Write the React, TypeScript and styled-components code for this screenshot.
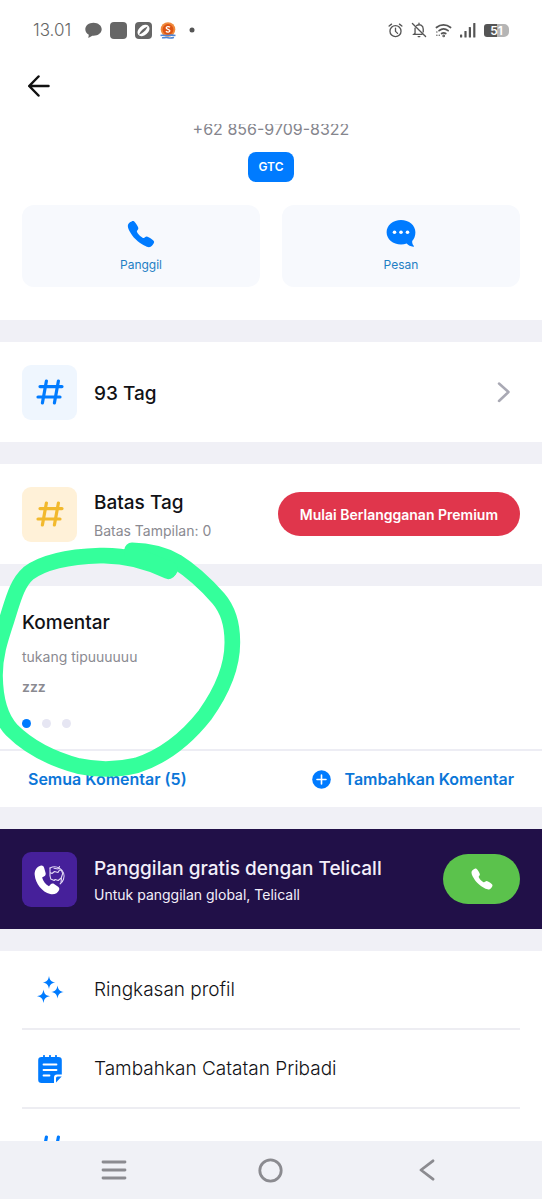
import React from "react";
import styled, { createGlobalStyle } from "styled-components";
import { IoCall } from "react-icons/io5";

const GlobalStyle = createGlobalStyle`
  *, *::before, *::after { box-sizing: border-box; }
  body {
    margin: 0;
    background: #fff;
    font-family: Inter, "Liberation Sans", sans-serif;
    color: #111216;
  }
  h2, p, ul { margin: 0; padding: 0; }
  button { border: 0; padding: 0; background: none; font: inherit; color: inherit; cursor: pointer; }
  a { color: inherit; text-decoration: none; }
  svg { display: block; flex: none; }
`;

const Screen = styled.div`
  display: flex;
  flex-direction: column;
  height: 100vh;
  overflow: hidden;
`;

const StatusBar = styled.div`
  display: flex;
  align-items: center;
  justify-content: space-between;
  flex: none;
  height: 60px;
  padding: 0 33px;
  color: #666;
`;

const StatusGroup = styled.div`
  display: flex;
  align-items: center;
  gap: 8px;
`;

const Clock = styled.time`
  margin-right: 6px;
  font-size: 17px;
  font-weight: 300;
  line-height: 20px;
`;

const Battery = styled.span`
  display: flex;
  align-items: center;
  justify-content: center;
  width: 25px;
  height: 13px;
  border-radius: 3px 5px 5px 3px;
  background: linear-gradient(to right, #555 52%, #b5b5b5 52%);
  color: #fff;
  font-size: 12px;
  font-weight: 600;
  line-height: 13px;
`;

const AppBar = styled.header`
  display: flex;
  align-items: flex-start;
  flex: none;
  height: 64px;
  padding: 15px 28px;
`;

const Content = styled.main`
  flex: 1;
  min-height: 0;
  overflow: hidden;
  background: #f0f0f6;
  display: flex;
  flex-direction: column;
  gap: 22px;
  & > * { flex: none; }
`;

const Profile = styled.section`
  display: flex;
  flex-direction: column;
  align-items: center;
  padding-bottom: 33px;
  background: #fff;
`;

const PhoneNumber = styled.div`
  display: flex;
  align-items: flex-end;
  height: 17px;
  overflow: hidden;
  color: #85858d;
  font-size: 16px;
  line-height: 24px;
`;

const Badge = styled.span`
  margin: 11px 0 23px;
  padding: 0 10px;
  border-radius: 8px;
  background: #007bff;
  color: #fff;
  font-size: 12px;
  font-weight: 600;
  line-height: 30px;
`;

const Actions = styled.div`
  display: grid;
  grid-template-columns: 1fr 1fr;
  gap: 22px;
  width: 100%;
  padding: 0 22px;
`;

const ActionCard = styled.button`
  display: flex;
  flex-direction: column;
  align-items: center;
  gap: 8px;
  height: 82px;
  padding-top: 14px;
  border-radius: 12px;
  background: #f7f9fd;
  color: #007bff;
`;

const ActionLabel = styled.span`
  color: #1f7fc4;
  font-size: 12px;
  line-height: 16px;
`;

const Row = styled.section<{ $dark?: boolean }>`
  display: flex;
  align-items: center;
  gap: 17px;
  height: 100px;
  padding: 0 22px;
  background: ${(p) => (p.$dark ? "#211048" : "#fff")};
  color: ${(p) => (p.$dark ? "#f3effa" : "inherit")};
`;

const Tile = styled.span<{ $bg: string; $fg: string }>`
  display: flex;
  align-items: center;
  justify-content: center;
  flex: none;
  width: 55px;
  height: 55px;
  border-radius: 9px;
  background: ${(p) => p.$bg};
  color: ${(p) => p.$fg};
`;

const RowText = styled.div<{ $gap?: number }>`
  display: flex;
  flex-direction: column;
  gap: ${(p) => p.$gap ?? 0}px;
  flex: 1;
  min-width: 0;
  padding-top: 3px;
  white-space: nowrap;
`;

const Title = styled.h2`
  font-size: 19px;
  font-weight: 500;
  line-height: 24px;
`;

const Caption = styled.p<{ $light?: boolean; $strong?: boolean }>`
  color: ${(p) => (p.$light ? "#f3effa" : "#8a8a91")};
  font-size: 14px;
  font-weight: ${(p) => (p.$strong ? 600 : 400)};
  line-height: 20px;
`;

const PremiumButton = styled.button`
  flex: none;
  height: 44px;
  padding: 0 22px;
  border-radius: 22px;
  background: #e0364c;
  color: #fff;
  font-size: 14px;
  font-weight: 600;
`;

const CallButton = styled.button`
  display: flex;
  align-items: center;
  justify-content: center;
  width: 77px;
  height: 50px;
  border-radius: 25px;
  background: #5bc24c;
  color: #fff;
`;

const Comments = styled.section`
  position: relative;
  background: #fff;
`;

const CommentBody = styled.div`
  display: flex;
  flex-direction: column;
  gap: 10px;
  padding: 25px 22px 21px;
  & > h2 { margin-bottom: 2px; }
`;

const Dots = styled.div`
  display: flex;
  gap: 11px;
  padding-top: 12px;
`;

const Dot = styled.span<{ $active?: boolean }>`
  width: 9px;
  height: 9px;
  border-radius: 50%;
  background: ${(p) => (p.$active ? "#007bff" : "#e6e6f3")};
`;

const CommentLinks = styled.div`
  display: flex;
  align-items: center;
  justify-content: space-between;
  height: 58px;
  padding: 0 28px;
  border-top: 2px solid #ededf4;
`;

const CommentLink = styled.a`
  display: flex;
  align-items: center;
  gap: 13px;
  color: #0b76d8;
  font-size: 16px;
  font-weight: 600;
  line-height: 24px;
`;

const Marker = styled.svg`
  position: absolute;
  left: 0;
  top: -56px;
  pointer-events: none;
`;

const Menu = styled.ul`
  padding: 0 22px;
  background: #fff;
  list-style: none;
`;

const MenuItem = styled.li`
  border-bottom: 2px solid #ededf2;
`;

const MenuLink = styled.a`
  display: flex;
  align-items: center;
  gap: 17px;
  height: 77px;
  font-size: 19px;
  font-weight: 300;
  line-height: 24px;
`;

const MenuIcon = styled.span`
  display: flex;
  justify-content: center;
  width: 55px;
  color: #007bff;
`;

const NavBar = styled.nav`
  display: grid;
  grid-template-columns: 1fr 1fr 1fr;
  flex: none;
  height: 58px;
  padding: 0 36px;
  background: #f0f1f6;
  color: #8b8b90;
`;

const NavButton = styled.button`
  display: flex;
  align-items: center;
  justify-content: center;
`;

const HashIcon = () => (
  <svg width="28" height="28" viewBox="0 0 28 28" fill="none" stroke="currentColor" strokeWidth="3.200" strokeLinecap="round">
    <path d="M10.4 3 6.4 25M22.4 3l-4 22M4 8.6h22M2 19h22" />
  </svg>
);

const ChatIcon = () => (
  <svg width="30" height="30" viewBox="0 0 30 30">
    <path
      d="M15 1C7 1 .6 6.300.6 13.200S7 25.400 15 25.400c2 0 4-.3 5.700-.9 1.700 1.700 3.800 2.900 6.500 3.300.7.100 1-.6.500-1-1.200-1.300-1.700-3-1.500-4.800 2-2.200 3.200-5.300 3.200-8.800C29.400 6.300 23 1 15 1z"
      fill="currentColor"
    />
    <g fill="#fff">
      <circle cx="8.500" cy="13.200" r="1.800" />
      <circle cx="15" cy="13.200" r="1.800" />
      <circle cx="21.500" cy="13.200" r="1.800" />
    </g>
  </svg>
);

const GlobeCallIcon = () => (
  <svg width="34" height="34" viewBox="0 0 34 34">
    <path
      d="M7.500 3.700C3.500 5 1.200 8.500 1.700 13c.8 8.500 7.300 17 15.500 19 4 .9 7.500-.7 8.900-4 .5-1.300.2-2.500-1-3.300l-4-2.600c-1.200-.8-2.600-.6-3.600.5L16 24.300c-3.300-1.900-5.800-5-6.900-8.900l2.200-1.100c1.200-.7 1.700-2 1.300-3.300L11.100 5.800c-.5-1.700-2-2.600-3.600-2.100z"
      fill="#fff"
    />
    <g fill="none" stroke="#e3d9f6" strokeWidth="1.100" strokeLinejoin="round" strokeLinecap="round">
      <path d="M17 6c3-1.600 6.500-1.600 9.500.2 4 2.500 5.500 7 4 11-.7 2-1.800 3.500-3.300 4.600" />
      <path d="M17 6v4.500l2 1 2.500-2 3.500 1 1.500-2.500 2 .5 1.200 3-1.500 4.500-3 2.500-3-1-1 1-3.500-1.500-.7-3.500M17 10.500v3.500M26.500 4.500l-1.500 2.500-4-.8M28.500 16.500l-.5 3.500" />
    </g>
  </svg>
);

const SparklesIcon = () => (
  <svg width="28" height="28" viewBox="0 0 28 28" fill="currentColor">
    <path d="M13 0c.8 4.400 2 5.700 6.300 6.500C15 7.300 13.800 8.600 13 13c-.8-4.400-2-5.700-6.300-6.500C11 5.700 12.200 4.400 13 0z" />
    <path d="M21.500 9.500c.8 4.400 2 5.700 6.300 6.500-4.300.8-5.500 2.100-6.300 6.500-.8-4.400-2-5.700-6.300-6.500 4.300-.8 5.500-2.100 6.300-6.500z" />
    <path d="M7.500 13.500c.8 4.500 2.100 5.900 6.500 6.700-4.400.8-5.700 2.200-6.500 6.700-.8-4.500-2.100-5.900-6.500-6.700 4.400-.8 5.700-2.200 6.500-6.700z" />
  </svg>
);

const NoteIcon = () => (
  <svg width="24" height="28" viewBox="0 0 24 28">
    <path d="M3.500 2H20.500A3.300 3.300 0 0 1 23.800 5.300V19.500H19a3 3 0 0 0-3 3V28H3.500A3.300 3.300 0 0 1 .2 24.700V5.300A3.300 3.300 0 0 1 3.500 2z" fill="currentColor" />
    <path d="M18 27.500v-4.300a1.700 1.700 0 0 1 1.700-1.700h4z" fill="currentColor" />
    <path d="M6 .8v2M12 .8v2M18 .8v2" stroke="currentColor" strokeWidth="1.800" strokeLinecap="round" />
    <path d="M5.500 9.500h13M5.500 15h13M5.500 20.500h6" stroke="#fff" strokeWidth="1.800" strokeLinecap="round" />
  </svg>
);

const AlarmIcon = () => (
  <svg width="15" height="15" viewBox="0 0 16 16" fill="none" stroke="#555" strokeWidth="1.400" strokeLinecap="round">
    <circle cx="8" cy="8.700" r="5.900" />
    <path d="M8 5.500v3.400l2.200 2.200M1.200 3.300 3.800 1.200M14.800 3.300l-2.600-2.100" />
  </svg>
);

const BellOffIcon = () => (
  <svg width="16" height="16" viewBox="0 0 17 16" fill="none" stroke="#555" strokeWidth="1.400" strokeLinecap="round">
    <path d="M1.500 1 15.500 15M4.300 6v5.500L3 12.700h8.500M6 3.300c3-2 7-.3 7 3.700v3M8.500.6v1M7.600 15h1.800" />
  </svg>
);

const WifiIcon = () => (
  <svg width="17" height="15" viewBox="0 0 18 15" fill="none" stroke="#555" strokeWidth="1.800" strokeLinecap="round">
    <path d="M1.500 4.300c4.500-3.800 10.500-3.800 15 0M4.300 7.700c3-2.400 6.700-2.400 9.600 0M7 10.700c1.500-1 3-1 4.400 0" />
    <circle cx="9.200" cy="13.200" r=".5" />
    <path d="M2 9v.1M2 12.500v.1M4.500 12.500v.1" strokeWidth="1.500" />
  </svg>
);

const SignalIcon = () => (
  <svg width="16" height="15" viewBox="0 0 16 15" fill="#555">
    <rect y="11.500" width="2.200" height="3" rx=".6" />
    <rect x="4.400" y="8" width="2.200" height="6.500" rx=".6" />
    <rect x="8.800" y="4" width="2.200" height="10.500" rx=".6" />
    <rect x="13.200" y="0" width="2.200" height="14.500" rx=".6" />
  </svg>
);

const CoinIcon = () => (
  <svg width="16" height="17" viewBox="0 0 16 17">
    <circle cx="8" cy="7.500" r="7.300" fill="#f08a3c" />
    <circle cx="8" cy="7.500" r="5.400" fill="#dd5413" />
    <path d="M10 5.300C9 4.300 6.100 4.400 6.200 6c.1 1.600 3.700 1 3.700 2.800 0 1.500-2.800 1.700-4 .5" fill="none" stroke="#fff" strokeWidth="1.300" />
    <path d="M.5 13.500c2.500-1 4.500.6 7.500 0s5-.5 7.500 0M2 15.700c2 .5 3-.7 6 0s4 .3 6-.3" fill="none" stroke="#4f86d6" strokeWidth="1.500" />
  </svg>
);

const App = () => (
  <>
    <GlobalStyle />
    <Screen>
      <StatusBar>
        <StatusGroup>
          <Clock>13.01</Clock>
          <svg width="17" height="17" viewBox="0 0 17 17" fill="#666">
            <path d="M8.500.8C4 .8.300 3.600.3 7.300c0 2.300 1.400 4.300 3.500 5.500L3.300 16l4-2.300 1.200.1c4.600 0 8.200-2.900 8.200-6.500S13 .8 8.500.8z" />
          </svg>
          <svg width="17" height="17" viewBox="0 0 17 17">
            <rect width="17" height="17" rx="4" fill="#666" />
          </svg>
          <svg width="17" height="17" viewBox="0 0 17 17">
            <rect width="17" height="17" rx="4" fill="#666" />
            <ellipse cx="8.500" cy="8.500" rx="6.800" ry="4.700" transform="rotate(-40 8.500 8.500)" fill="#fff" />
            <path d="M4 12.500c1.500-3.500 4.500-6.500 8.500-8-1 3.500-4.500 6.800-8.500 8z" fill="#666" />
          </svg>
          <CoinIcon />
          <svg width="14" height="6" viewBox="0 0 14 6">
            <circle cx="8" cy="3" r="2.500" fill="#555" />
          </svg>
        </StatusGroup>
        <StatusGroup>
          <AlarmIcon />
          <BellOffIcon />
          <WifiIcon />
          <SignalIcon />
          <Battery>51</Battery>
        </StatusGroup>
      </StatusBar>

      <AppBar>
        <button aria-label="Kembali">
          <svg width="22" height="22" viewBox="0 0 22 22" fill="none" stroke="#111" strokeWidth="2.500" strokeLinecap="round" strokeLinejoin="round">
            <path d="M20.500 11H1.500M10.500 1.500 1.200 11l9.300 9.500" />
          </svg>
        </button>
      </AppBar>

      <Content>
        <Profile>
          <PhoneNumber>+62 856-9709-8322</PhoneNumber>
          <Badge>GTC</Badge>
          <Actions>
            <ActionCard>
              <IoCall size={30} />
              <ActionLabel>Panggil</ActionLabel>
            </ActionCard>
            <ActionCard>
              <ChatIcon />
              <ActionLabel>Pesan</ActionLabel>
            </ActionCard>
          </Actions>
        </Profile>

        <Row>
          <Tile $bg="#eff6fe" $fg="#007bff">
            <HashIcon />
          </Tile>
          <RowText>
            <Title>93 Tag</Title>
          </RowText>
          <svg width="32" height="22" viewBox="0 0 32 22" fill="none" stroke="#a9a9b4" strokeWidth="2.500" strokeLinecap="round" strokeLinejoin="round">
            <path d="M11 2.500 20.500 11 11 20" />
          </svg>
        </Row>

        <Row>
          <Tile $bg="#fff1d8" $fg="#f2b92d">
            <HashIcon />
          </Tile>
          <RowText $gap={6}>
            <Title>Batas Tag</Title>
            <Caption>Batas Tampilan: 0</Caption>
          </RowText>
          <PremiumButton>Mulai Berlangganan Premium</PremiumButton>
        </Row>

        <Comments>
          <CommentBody>
            <Title>Komentar</Title>
            <Caption>tukang tipuuuuuu</Caption>
            <Caption $strong>zzz</Caption>
            <Dots>
              <Dot $active />
              <Dot />
              <Dot />
            </Dots>
          </CommentBody>
          <CommentLinks>
            <CommentLink href="#semua">Semua Komentar (5)</CommentLink>
            <CommentLink href="#tambah">
              <svg width="19" height="19" viewBox="0 0 19 19">
                <circle cx="9.500" cy="9.500" r="9.300" fill="#007bff" />
                <path d="M9.500 5v9M5 9.500h9" stroke="#fff" strokeWidth="1.600" strokeLinecap="round" />
              </svg>
              Tambahkan Komentar
            </CommentLink>
          </CommentLinks>
          <Marker width="250" height="270" viewBox="0 0 750 810" fill="none" stroke="#34ff9b" strokeWidth="47" strokeLinecap="round" strokeLinejoin="round" aria-hidden="true">
            <path d="M505 124C440 92 370 75 300 77C210 80 130 96 85 130C50 160 38 215 20 270C0 330-16 380-15 440C-14 500-2 560 35 600C85 650 150 685 235 708C290 720 350 720 410 706C490 680 560 625 615 555C665 485 698 410 697 335C697 285 685 240 655 205C615 160 570 120 530 95C490 72 440 62 396 61" />
            <path d="M396 72 510 118" />
          </Marker>
        </Comments>

        <Row $dark>
          <Tile $bg="#46209a" $fg="#fff">
            <GlobeCallIcon />
          </Tile>
          <RowText $gap={4}>
            <Title>Panggilan gratis dengan Telicall</Title>
            <Caption $light>Untuk panggilan global, Telicall</Caption>
          </RowText>
          <CallButton aria-label="Panggil">
            <IoCall size={24} />
          </CallButton>
        </Row>

        <Menu>
          <MenuItem>
            <MenuLink href="#ringkasan">
              <MenuIcon><SparklesIcon /></MenuIcon>
              Ringkasan profil
            </MenuLink>
          </MenuItem>
          <MenuItem>
            <MenuLink href="#catatan">
              <MenuIcon><NoteIcon /></MenuIcon>
              Tambahkan Catatan Pribadi
            </MenuLink>
          </MenuItem>
          <MenuItem>
            <MenuLink href="#tag" aria-label="Tag">
              <MenuIcon><HashIcon /></MenuIcon>
            </MenuLink>
          </MenuItem>
        </Menu>
      </Content>

      <NavBar>
        <NavButton aria-label="Aplikasi terbaru">
          <svg width="26" height="20" viewBox="0 0 26 20" stroke="currentColor" strokeWidth="2.800" strokeLinecap="round">
            <path d="M2 2h22M2 10h22M2 18h22" />
          </svg>
        </NavButton>
        <NavButton aria-label="Beranda">
          <svg width="25" height="25" viewBox="0 0 25 25" fill="none" stroke="currentColor" strokeWidth="2.800">
            <circle cx="12.500" cy="12.500" r="10.700" />
          </svg>
        </NavButton>
        <NavButton aria-label="Kembali">
          <svg width="18" height="22" viewBox="0 0 18 22" fill="none" stroke="currentColor" strokeWidth="2.800" strokeLinecap="round" strokeLinejoin="round">
            <path d="M14 1.800 2 11l12 9.200" />
          </svg>
        </NavButton>
      </NavBar>
    </Screen>
  </>
);

export default App;
